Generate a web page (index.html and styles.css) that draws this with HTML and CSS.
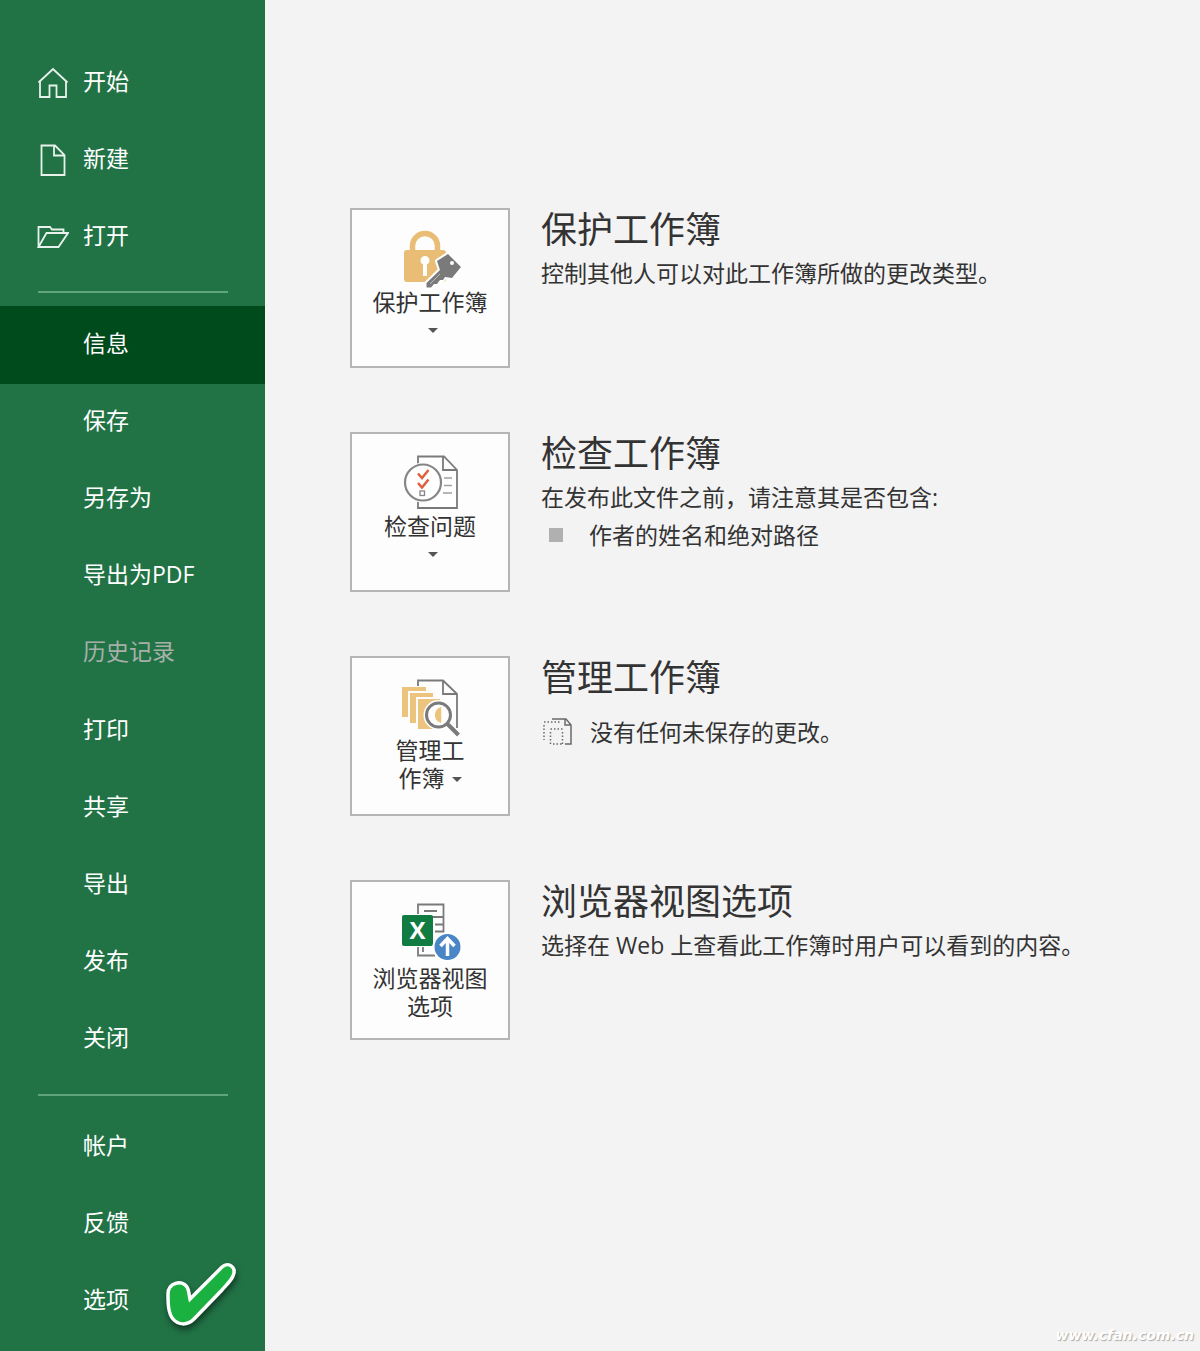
FILE: index.html
```html
<!DOCTYPE html>
<html lang="zh-CN">
<head>
    <meta charset="UTF-8">
    <meta name="viewport" content="width=device-width, initial-scale=1.0">
    <title>信息</title>
    <link rel="stylesheet" href="styles.css">
</head>
<body>

<div class="backstage">
    <nav class="sidebar">
        <a class="item" href="#">
            <svg class="itemIcon" viewBox="0 0 32 32"><path d="M1.500 15.500L16 2l14.500 13.500M3 14v16h9.500V18.500h7V30H29V14"/></svg>
            开始
        </a>
        <a class="item" href="#">
            <svg class="itemIcon" viewBox="0 0 32 32"><path d="M4.500 1.500H18L27.500 11v20h-23zM17 1.500V11.500h10.500"/></svg>
            新建
        </a>
        <a class="item" href="#">
            <svg class="itemIcon" viewBox="0 0 32 32"><path d="M1.500 26V6H13l2 2.500h11.500V12M1.500 26L9.500 12H31l-9.500 14z"/></svg>
            打开
        </a>
        <hr class="separator">
        <a class="item active" href="#">信息</a>
        <a class="item" href="#">保存</a>
        <a class="item" href="#">另存为</a>
        <a class="item" href="#">导出为PDF</a>
        <a class="item disabled" aria-disabled="true">历史记录</a>
        <a class="item" href="#">打印</a>
        <a class="item" href="#">共享</a>
        <a class="item" href="#">导出</a>
        <a class="item" href="#">发布</a>
        <a class="item" href="#">关闭</a>
        <hr class="separator">
        <a class="item" href="#">帐户</a>
        <a class="item" href="#">反馈</a>
        <a class="item" href="#">
            选项
            <svg class="tick" viewBox="0 0 84 84"><path d="M9 41c0-11 14-15 19-7 2 3 2 8 3 12l32-32c7-6 15 1 11 9-2 5-7 9-11 14L35 66c-7 7-16 6-21 0-5-6-5-16-5-25z"/></svg>
        </a>
    </nav>

    <main class="content">
        <section class="row">
            <button class="tile" type="button">
                <svg class="tileIcon" viewBox="0 0 60 60">
                    <path d="M10.500 22v-6a12.500 12.500 0 0 1 25 0v6" fill="none" stroke="#e9bd76" stroke-width="5.500"/>
                    <rect x="2" y="20" width="42" height="32" rx="3" fill="#e9bd76"/>
                    <path d="M23 26a4.500 4.500 0 0 1 2 8.500V46h-4V34.500a4.500 4.500 0 0 1 2-8.500z" fill="#fff"/>
                    <path d="M46 24l13 13-9 11-7-1-2 3h-3l-3 4h-3l-3 3.500h-4.500V53L38 40l-3-9z" fill="#7a7a7a" stroke="#fff" stroke-width="4" stroke-linejoin="round"/>
                    <path d="M46 24l13 13-9 11-7-1-2 3h-3l-3 4h-3l-3 3.500h-4.500V53L38 40l-3-9z" fill="#7a7a7a"/>
                    <circle cx="50" cy="33" r="2" fill="#fff"/>
                    <path d="M28 54l10-10" stroke="#bbb" stroke-width="1"/>
                </svg>
                <span class="tileText">保护工作簿</span>
                <span class="arrow"></span>
            </button>
            <div class="info">
                <h2>保护工作簿</h2>
                <p>控制其他人可以对此工作簿所做的更改类型。</p>
            </div>
        </section>

        <section class="row">
            <button class="tile" type="button">
                <svg class="tileIcon" viewBox="0 0 60 60">
                    <path d="M16 2.500h26L55 16v38H16zM41 2.500V16h14" fill="#fff" stroke="#7a7a7a" stroke-width="1.800"/>
                    <path d="M42 24h8M42 31.500h8M41 39h9" stroke="#a0a0a0" stroke-width="1.500"/>
                    <circle cx="21" cy="28.500" r="20" fill="#fff"/>
                    <circle cx="21" cy="28.500" r="18" fill="#fff" stroke="#858585" stroke-width="2.200"/>
                    <path d="M16 19.500l4 4.500 6.500-8M16 29l4 4.500 6.500-8" fill="none" stroke="#e0603c" stroke-width="2.500"/>
                    <rect x="18" y="37" width="4.500" height="4.500" fill="none" stroke="#858585" stroke-width="1.300"/>
                </svg>
                <span class="tileText">检查问题</span>
                <span class="arrow"></span>
            </button>
            <div class="info">
                <h2>检查工作簿</h2>
                <p>在发布此文件之前，请注意其是否包含:</p>
                <ul>
                    <li>作者的姓名和绝对路径</li>
                </ul>
            </div>
        </section>

        <section class="row">
            <button class="tile" type="button">
                <svg class="tileIcon" viewBox="0 0 60 60">
                    <path d="M16 8V2.500h25L55 16v34M41 2.500V16h14" fill="none" stroke="#7a7a7a" stroke-width="1.800"/>
                    <path d="M0 9h24v4H6v26H0z" fill="#ecc47d"/>
                    <path d="M8 15h23v4H14v26H8z" fill="#ecc47d"/>
                    <path d="M16 21h22v30H16z" fill="#ecc47d"/>
                    <circle cx="36.500" cy="37" r="15" fill="#fff"/>
                    <path d="M38.500 30v14a7.500 7.500 0 0 1 0-14z" fill="#ecc47d" stroke="#ecc47d" stroke-width="1.500"/>
                    <circle cx="36.500" cy="37" r="12" fill="none" stroke="#7a7a7a" stroke-width="3"/>
                    <path d="M45 45.500L56.500 57" stroke="#7a7a7a" stroke-width="4"/>
                </svg>
                <span class="tileText">管理工<br>作簿<span class="arrow inline"></span></span>
            </button>
            <div class="info">
                <h2>管理工作簿</h2>
                <div class="status">
                    <svg class="statusIcon" viewBox="0 0 30 30">
                        <path d="M9 2h14l5 6v19h-6M22 2v6h6" fill="none" stroke="#6a6a6a" stroke-width="1.500"/>
                        <path d="M1 5h16M1 8v15M7.500 12h13M7.500 15v12M19.500 15v12M10 27h9" fill="none" stroke="#6a6a6a" stroke-width="1.500" stroke-dasharray="1.500 2"/>
                    </svg>
                    <span>没有任何未保存的更改。</span>
                </div>
            </div>
        </section>

        <section class="row">
            <button class="tile tall" type="button">
                <svg class="tileIcon" viewBox="0 0 60 60">
                    <path d="M16 12V2.500h25.500V31M22 9h13M30 15h11M33 22.500h8M33 29.500h8M16 45v8.500h17M21 45v5" fill="none" stroke="#7a7a7a" stroke-width="1.800"/>
                    <rect y="13" width="31" height="31" rx="2" fill="#107c41"/>
                    <text x="15.500" y="37" class="sheetLetter">X</text>
                    <circle cx="45.500" cy="45" r="15" fill="#fff"/>
                    <circle cx="45.500" cy="45" r="13" fill="#4a86c5"/>
                    <path d="M45.500 54V37M38.500 44l7-7.500 7 7.500" fill="none" stroke="#fff" stroke-width="3.500"/>
                </svg>
                <span class="tileText">浏览器视图<br>选项</span>
            </button>
            <div class="info">
                <h2>浏览器视图选项</h2>
                <p>选择在 Web 上查看此工作簿时用户可以看到的内容。</p>
            </div>
        </section>
    </main>
</div>

<div class="watermark">www.cfan.com.cn</div>

</body>
</html>
```
FILE: styles.css
```css
* {
    box-sizing: border-box;
}

body {
    margin: 0;
    background: #f3f3f3;
    color: #333;
    font-family: "Open Sans", "Noto Sans CJK SC", sans-serif;
    font-size: 23px;
    line-height: 28px;
}

.backstage {
    display: flex;
    min-height: 100vh;
}

/* left menu */
.sidebar {
    display: flex;
    flex-direction: column;
    flex: 0 0 265px;
    padding: 44px 0 11px;
    background: #217346;
}

.item {
    position: relative;
    display: flex;
    flex: 1 0 60px;
    align-items: center;
    padding: 0 0 4px 83px;
    color: #fff;
    text-decoration: none;
}

.item.active {
    background: #004b1c;
}

.item.disabled {
    color: #a6b0a9;
}

.itemIcon {
    width: 32px;
    height: 32px;
    margin: 4px 14px 0 -46px;
    fill: none;
    stroke: #e8f1ec;
    stroke-width: 1.8;
}

.separator {
    width: 190px;
    height: 2px;
    margin: 16px 0 13px 38px;
    border: none;
    background: #5fa47c;
}

.tick {
    position: absolute;
    left: 159px;
    top: -10px;
    width: 84px;
    height: 84px;
    fill: #1bb141;
    stroke: #fff;
    stroke-width: 3.5;
    filter: drop-shadow(1px 4px 3px rgba(0, 0, 0, 0.5));
}

/* right side */
.content {
    display: flex;
    flex: 1;
    flex-direction: column;
    gap: 64px;
    padding: 208px 40px 60px 85px;
}

.row {
    display: flex;
    gap: 31px;
}

.tile {
    display: flex;
    flex: 0 0 160px;
    flex-direction: column;
    align-items: center;
    height: 160px;
    padding: 20px 0 0;
    border: 2px solid #b5b5b5;
    background: #fdfdfd;
    color: #333;
    font: inherit;
}

.tileIcon {
    flex: none;
    width: 60px;
    height: 60px;
    margin: 0 0 -2px 3px;
}

.tall .tileIcon {
    margin-bottom: 2px;
}

.arrow {
    margin: 12px 0 0 6px;
    border: 5px solid transparent;
    border-top-color: #555;
    border-bottom: none;
}

.arrow.inline {
    display: inline-block;
    margin: 0 0 5px 7px;
}

.sheetLetter {
    fill: #fff;
    font-size: 24px;
    font-weight: bold;
    text-anchor: middle;
}

.info {
    flex: 1;
}

.info h2 {
    margin: 0;
    font-size: 36px;
    font-weight: 400;
    line-height: 44px;
}

.info p {
    margin: 7px 0 10px;
}

.info ul {
    margin: 0;
    padding: 0;
    list-style: none;
}

.info li {
    display: flex;
    align-items: center;
    gap: 26px;
    padding-left: 8px;
}

.info li::before {
    content: "";
    width: 14px;
    height: 14px;
    background: #b0b0b0;
}

.status {
    display: flex;
    align-items: center;
    gap: 17px;
    margin-top: 17px;
    padding-left: 2px;
}

.statusIcon {
    width: 30px;
    height: 30px;
}

.watermark {
    position: absolute;
    right: 6px;
    bottom: 6px;
    color: #fff;
    font-family: "DejaVu Sans", sans-serif;
    font-size: 14px;
    font-weight: bold;
    font-style: italic;
    line-height: 20px;
    text-shadow: 1px 1px 1px #aaa;
}
```
